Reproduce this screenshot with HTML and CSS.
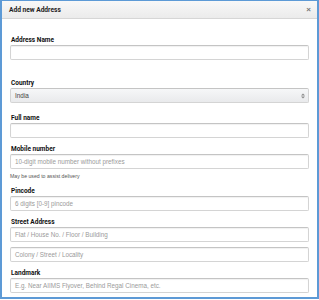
FILE: index.html
```
<!DOCTYPE html>
<html>
<head>
<meta charset="utf-8">
<link rel="stylesheet" href="styles.css">
</head>
<body>
<div class="modal">
  <div class="header">
    <span class="title">Add new Address</span>
    <span class="close">&#215;</span>
  </div>
  <div class="content">
    <div class="field gap-lg">
      <div class="label">Address Name</div>
      <div class="input"></div>
    </div>
    <div class="field gap-md">
      <div class="label">Country</div>
      <div class="input select"><span class="value">India</span><svg class="arrow" width="4" height="6" viewBox="0 0 4 6"><path d="M0 2.4 L2 0.4 L4 2.4 Z M0 3.6 L2 5.6 L4 3.6 Z" fill="#8a8a8a"/></svg></div>
    </div>
    <div class="field">
      <div class="label">Full name</div>
      <div class="input"></div>
    </div>
    <div class="field">
      <div class="label">Mobile number</div>
      <div class="input"><span class="ph">10-digit mobile number without prefixes</span></div>
      <div class="hint">May be used to assist delivery</div>
    </div>
    <div class="field">
      <div class="label">Pincode</div>
      <div class="input"><span class="ph">6 digits [0-9] pincode</span></div>
    </div>
    <div class="field">
      <div class="label">Street Address</div>
      <div class="input"><span class="ph">Flat / House No. / Floor / Building</span></div>
      <div class="input second"><span class="ph">Colony / Street / Locality</span></div>
    </div>
    <div class="field last">
      <div class="label">Landmark</div>
      <div class="input"><span class="ph">E.g. Near AIIMS Flyover, Behind Regal Cinema, etc.</span></div>
    </div>
  </div>
</div>
</body>
</html>
```
FILE: styles.css
```
html, body {
  margin: 0;
  padding: 0;
  background: #ffffff;
}
body {
  width: 319px;
  height: 300px;
  overflow: hidden;
  font-family: "Liberation Sans", Arial, sans-serif;
}
.modal {
  box-sizing: border-box;
  width: 319px;
  height: 299px;
  border: 2px solid #5d9ad6;
  border-top-width: 1px;
  background: #fff;
  display: flex;
  flex-direction: column;
  overflow: hidden;
}
.header {
  flex-shrink: 0;
  height: 17px;
  border-bottom: 1px solid #d6d6d6;
  background: linear-gradient(#f8f8f8, #ebebeb);
  display: flex;
  align-items: center;
  justify-content: space-between;
  padding: 0 6px 0 7px;
}
.title {
  font-family: Roboto, "Liberation Sans", Arial, sans-serif;
  font-size: 6.6px;
  font-weight: bold;
  color: #222;
}
.close {
  font-size: 8px;
  font-weight: bold;
  color: #777;
  line-height: 1;
}
.content {
  flex-shrink: 0;
  padding: 17px 8px 0 8px;
  display: flex;
  flex-direction: column;
}
.field {
  display: flex;
  flex-direction: column;
  margin-bottom: 7px;
}
.field.gap-lg { margin-bottom: 19px; }
.field.gap-md { margin-bottom: 11px; }
.field.last { margin-bottom: 0; }
.label {
  font-family: Roboto, "Liberation Sans", Arial, sans-serif;
  font-size: 6.5px;
  font-weight: bold;
  color: #111;
  line-height: 9px;
  padding-left: 1px;
}
.input {
  box-sizing: border-box;
  height: 15px;
  border: 1px solid #d4d4d4;
  border-top-color: #c4c4c4;
  border-radius: 2px;
  box-shadow: inset 0 1px 1px rgba(0,0,0,0.06);
  display: flex;
  align-items: center;
  padding: 0 4px;
  background: #fff;
}
.input.second { margin-top: 5px; }
.ph {
  font-size: 6.3px;
  color: #9a9a9a;
  white-space: nowrap;
}
.select {
  background: linear-gradient(#f6f7f8, #e9eaec);
  box-shadow: none;
  justify-content: space-between;
  padding-right: 3px;
}
.value {
  font-size: 6.4px;
  color: #444;
}
.arrow {
  display: block;
}
.hint {
  font-size: 5.2px;
  color: #555;
  line-height: 8px;
  margin-top: 3px;
}
```
